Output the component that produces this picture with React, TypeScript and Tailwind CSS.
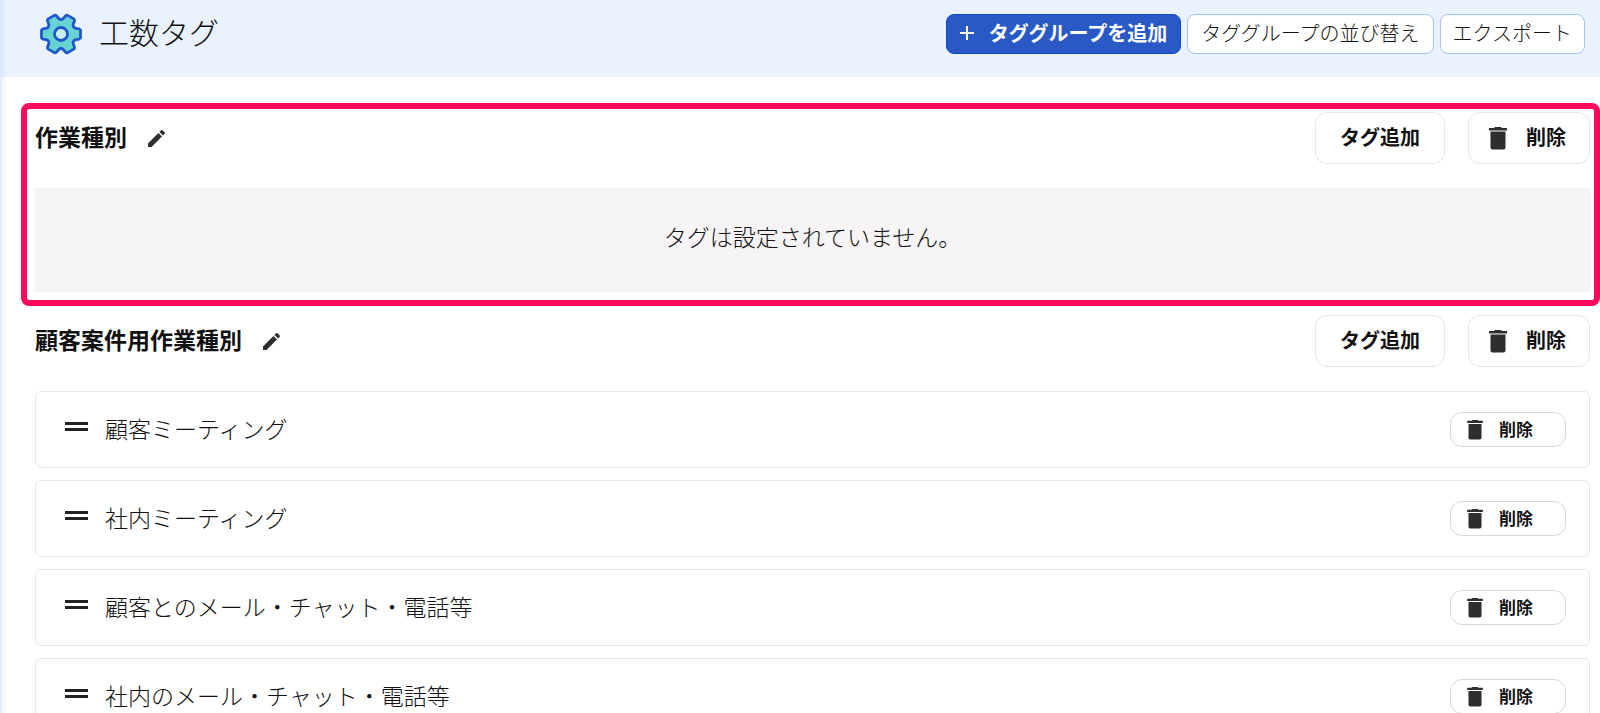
import React from "react";

const tags = [
    "顧客ミーティング",
    "社内ミーティング",
    "顧客とのメール・チャット・電話等",
    "社内のメール・チャット・電話等"
];

// One tooth pointing right, repeated every 60 degrees
const tooth = [[13, -6.5], [15, -5.6], [18, -5.2], [19.5, -4], [19.5, 4], [18, 5.2], [15, 5.6], [13, 6.5]];
const gearPoints = [0, 60, 120, 180, 240, 300]
    .flatMap((deg) => {
        const a = (deg * Math.PI) / 180;
        return tooth.map(([x, y]) => `${x * Math.cos(a) - y * Math.sin(a)},${x * Math.sin(a) + y * Math.cos(a)}`);
    })
    .join(" ");

function GearIcon() {
    return (
        <svg viewBox="-21 -21 42 42" className="size-[42px] shrink-0" aria-hidden="true">
            <polygon points={gearPoints} fill="#67d3d3" stroke="#1f57cc" strokeWidth="2.8" strokeLinejoin="round" />
            <circle r="6.5" fill="#c9eff0" stroke="#1f57cc" strokeWidth="2.8" />
        </svg>
    );
}

function TrashIcon({ className }: { className: string }) {
    return (
        <svg viewBox="0 0 18 23" className={className} fill="#2e2e2e" aria-hidden="true">
            <path d="M0 1h5L6 0h6l1 1h5v2.500H0z" />
            <path d="M1.500 4.500h15v16a2 2 0 0 1-2 2h-11a2 2 0 0 1-2-2z" />
        </svg>
    );
}

function PencilIcon() {
    return (
        <svg viewBox="3 3 18 18" className="size-[17px]" fill="#2e2e2e" aria-hidden="true">
            <path d="M3 17.250V21h3.750L17.810 9.940l-3.750-3.750zM20.710 7.040a1 1 0 0 0 0-1.410l-2.340-2.340a1 1 0 0 0-1.410 0l-1.830 1.830 3.750 3.750z" />
        </svg>
    );
}

function GroupHeader({ title }: { title: string }) {
    return (
        <div className="flex items-start justify-between mb-6">
            <div className="flex items-center gap-[21px] h-[52px]">
                <h2 className="pb-1 text-[23px] leading-8 font-bold">{title}</h2>
                <button type="button" aria-label={`${title}を編集`}>
                    <PencilIcon />
                </button>
            </div>
            <div className="flex gap-[23px] text-xl font-bold">
                <button type="button" className="h-[52px] px-6 pb-0.5 border border-[#e6e6e6] bg-white rounded-xl">
                    タグ追加
                </button>
                <button type="button" className="flex items-center gap-[19px] h-[52px] pl-5 pr-[23px] border border-[#e6e6e6] bg-white rounded-xl">
                    <TrashIcon className="w-[18px] h-[23px]" />
                    <span className="pb-0.5">削除</span>
                </button>
            </div>
        </div>
    );
}

function TagRow({ name }: { name: string }) {
    return (
        <li className="flex items-center justify-between h-[77px] pl-[29px] pr-[23px] border border-[#e6e6e6] rounded-md">
            <div className="flex items-center gap-[17px] pb-1">
                <svg viewBox="0 0 23 12" className="w-[23px] h-3" fill="#222222" aria-hidden="true">
                    <path d="M0 0h23v3H0zM0 6h23v3H0z" />
                </svg>
                <span className="text-[23px] leading-8 font-light">{name}</span>
            </div>
            <button type="button" className="flex items-center gap-4 w-[116px] h-[35px] pl-4 border border-[#d8d8d8] bg-white rounded-xl text-[17px] font-bold">
                <TrashIcon className="w-4 h-5" />
                <span className="pb-0.5">削除</span>
            </button>
        </li>
    );
}

export default function App() {
    return (
        <div className="relative h-screen overflow-hidden border-l border-[#dbe6ff] bg-white text-[#111111] font-['Noto_Sans_CJK_JP',sans-serif]">
            {/* Shadow cast by the side menu */}
            <div className="absolute inset-y-0 left-0 w-1.5 bg-gradient-to-r from-[#5078c8]/10 to-transparent pointer-events-none" />

            <header className="flex items-center justify-between h-[77px] pl-[39px] pr-[15px] pb-[10px] bg-[#eaf2ff]">
                <div className="flex items-center gap-[17px]">
                    <GearIcon />
                    <h1 className="pb-1.5 text-3xl font-light">工数タグ</h1>
                </div>
                <div className="flex gap-1.5 text-xl font-light">
                    <button type="button" className="flex items-center gap-[13px] h-10 px-[13px] pb-0.5 border border-[#0f49bd] bg-[#2859c5] text-white rounded-lg font-bold">
                        <svg viewBox="0 0 16 16" className="size-4" stroke="white" strokeWidth="2" aria-hidden="true">
                            <path d="M7 1v14M0 8h14" />
                        </svg>
                        タググループを追加
                    </button>
                    <button type="button" className="h-10 px-[13px] pb-0.5 border border-[#a3c1fa] bg-white rounded-lg">
                        タググループの並び替え
                    </button>
                    <button type="button" className="h-10 px-3 pb-0.5 border border-[#a3c1fa] bg-white rounded-lg">
                        エクスポート
                    </button>
                </div>
            </header>

            <main className="pt-[26px] pl-5">
                {/* Highlighted group */}
                <section className="border-[6px] border-[#ff0a5b] rounded-lg pt-[3px] pr-1 pb-2 pl-2">
                    <GroupHeader title="作業種別" />
                    <p className="flex items-center justify-center h-[104px] pb-2 bg-[#f6f4f5] text-[23px] font-light">
                        タグは設定されていません。
                    </p>
                </section>

                <section className="pt-[9px] pr-2.5 pl-3.5">
                    <GroupHeader title="顧客案件用作業種別" />
                    <ul className="flex flex-col gap-3">
                        {tags.map((tag) => (
                            <TagRow key={tag} name={tag} />
                        ))}
                    </ul>
                </section>
            </main>
        </div>
    );
}
